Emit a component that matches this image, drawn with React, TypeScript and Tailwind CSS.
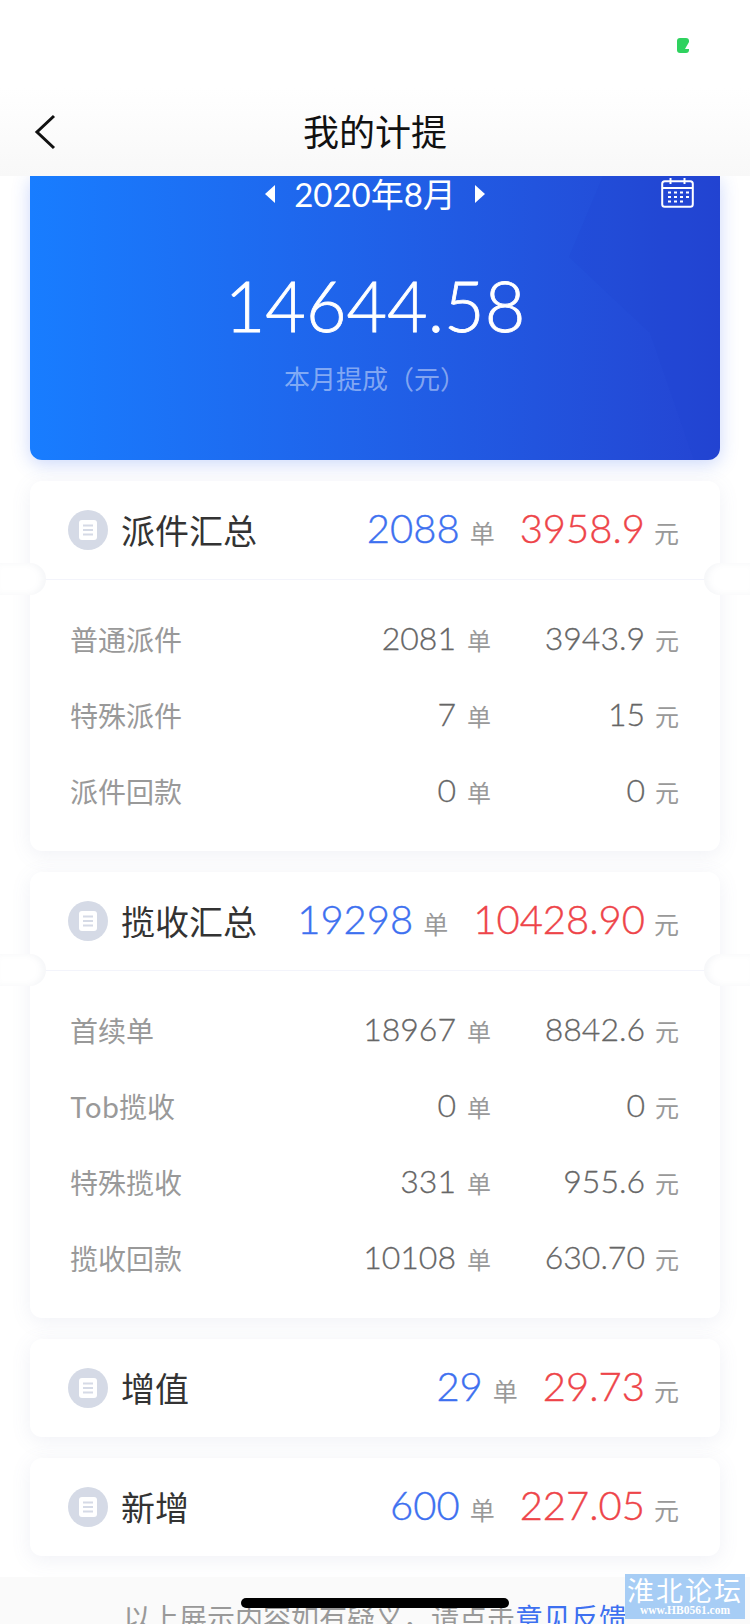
const cn = '"Noto Sans CJK SC", sans-serif';

type Row = { label: string; count: string; amount: string };

const sendRows: Row[] = [
  { label: '普通派件', count: '2081', amount: '3943.9' },
  { label: '特殊派件', count: '7', amount: '15' },
  { label: '派件回款', count: '0', amount: '0' },
];

const pickupRows: Row[] = [
  { label: '首续单', count: '18967', amount: '8842.6' },
  { label: 'Tob揽收', count: '0', amount: '0' },
  { label: '特殊揽收', count: '331', amount: '955.6' },
  { label: '揽收回款', count: '10108', amount: '630.70' },
];

function DocIcon() {
  return (
    <svg width="40" height="40" viewBox="0 0 40 40" className="shrink-0">
      <circle cx="20" cy="20" r="20" fill="#d5dae6" />
      <rect x="11" y="10" width="18" height="20" rx="3" fill="#fff" />
      <path d="M15 15.5h10M15 20h10M15 24.5h10" stroke="#d5dae6" strokeWidth="1.8" />
    </svg>
  );
}

function Summary({ title, count, amount }: { title: string; count: string; amount: string }) {
  return (
    <div className="flex h-[98px] items-center pl-[38px] pr-[41px]">
      <DocIcon />
      <div className="ml-[13px] flex-1 text-[34px] leading-none text-[#333] font-['Noto_Sans_CJK_SC',sans-serif]">{title}</div>
      <div className="flex items-baseline pb-[4px] font-['Lato',sans-serif] font-light [-webkit-text-stroke:0.4px]">
        <span className="text-[40px] leading-none text-[#3d70f0]">{count}</span>
        <span className="ml-[10px] text-[25px] font-normal leading-none text-[#999] [-webkit-text-stroke:0] font-['Noto_Sans_CJK_SC',sans-serif]">单</span>
        <span className="ml-[25px] text-[40px] leading-none text-[#ee4449]">{amount}</span>
        <span className="ml-[9px] text-[25px] font-normal leading-none text-[#999] [-webkit-text-stroke:0] font-['Noto_Sans_CJK_SC',sans-serif]">元</span>
      </div>
    </div>
  );
}

function DetailRow({ label, count, amount }: Row) {
  return (
    <div className="flex h-[76px] items-center pl-[40px] pr-[41px]">
      <div className="flex-1 text-[28px] leading-none text-[#999] font-['Noto_Sans_CJK_SC',sans-serif]">{label}</div>
      <div className="flex items-baseline pb-[2px] font-['Lato',sans-serif] font-light [-webkit-text-stroke:0.3px]">
        <span className="text-[32px] leading-none text-[#666]">{count}</span>
        <span className="ml-[11px] text-[24px] font-normal leading-none text-[#999] [-webkit-text-stroke:0] font-['Noto_Sans_CJK_SC',sans-serif]">单</span>
      </div>
      <div className="flex w-[188px] items-baseline justify-end pb-[2px] font-['Lato',sans-serif] font-light [-webkit-text-stroke:0.3px]">
        <span className="text-[32px] leading-none text-[#666]">{amount}</span>
        <span className="ml-[10px] text-[24px] font-normal leading-none text-[#999] [-webkit-text-stroke:0] font-['Noto_Sans_CJK_SC',sans-serif]">元</span>
      </div>
    </div>
  );
}

function Notch({ side }: { side: 'left' | 'right' }) {
  return (
    <div
      className={
        side === 'left'
          ? 'absolute left-[-30px] top-[82px] h-8 w-[46px] rounded-r-full bg-white shadow-[inset_-4px_0_6px_rgba(120,125,160,0.07)]'
          : 'absolute right-[-30px] top-[82px] h-8 w-[46px] rounded-l-full bg-white shadow-[inset_4px_0_6px_rgba(120,125,160,0.07)]'
      }
    />
  );
}

function Card({ title, count, amount, rows }: { title: string; count: string; amount: string; rows?: Row[] }) {
  return (
    <section className="relative rounded-xl bg-white shadow-[0_4px_20px_rgba(110,120,170,0.1)]">
      <Summary title={title} count={count} amount={amount} />
      {rows && (
        <>
          <Notch side="left" />
          <Notch side="right" />
          <div className="border-t border-[#f3f4fb] pb-[22px] pt-[21px]">
            {rows.map((row) => (
              <DetailRow key={row.label} {...row} />
            ))}
          </div>
        </>
      )}
    </section>
  );
}

export default function App() {
  return (
    <div className="relative h-[1624px] w-[750px] overflow-hidden bg-white" style={{ fontFamily: cn }}>
      {/* Status bar + nav */}
      <header className="relative z-10 h-[176px] bg-gradient-to-b from-white from-50% to-[#f8f8f8]">
        <svg width="12" height="15" viewBox="0 0 12 15" className="absolute left-[677px] top-[38px]">
          <rect width="12" height="15" rx="3" fill="#2fd25f" />
          <path d="M12 4 8 11h4z" fill="#fff" />
        </svg>
        <svg width="22" height="36" viewBox="0 0 22 36" className="absolute left-[34px] top-[114px]" fill="none">
          <path d="M20 2 3 18l17 16" stroke="#111" strokeWidth="3" />
        </svg>
        <h1 className="pt-[105px] text-center text-[36px] font-normal leading-[50px] text-[#111]">我的计提</h1>
      </header>

      <main className="flex flex-col gap-[21px] px-[30px]">
        {/* Monthly total */}
        <section className="relative h-[284px] overflow-hidden rounded-b-xl bg-gradient-to-r from-[#187dff] to-[#2444d2] shadow-[0_4px_18px_rgba(50,100,240,0.25)]">
          <svg viewBox="0 0 690 284" className="absolute inset-0 h-full w-full">
            <path d="M573 0 539 81 620 157 664 284H690V0z" fill="#1f3fcf" opacity="0.14" />
          </svg>
          <div className="relative flex h-[36px] items-center justify-center text-white">
            <svg width="10" height="18" viewBox="0 0 10 18"><path d="M10 0v18L0 9z" fill="#fff" /></svg>
            <span className="mx-[19px] text-[33px] leading-none font-['Lato','Noto_Sans_CJK_SC',sans-serif]">2020年8月</span>
            <svg width="10" height="18" viewBox="0 0 10 18"><path d="M0 0v18l10-9z" fill="#fff" /></svg>
          </div>
          <svg width="33" height="30" viewBox="0 0 33 30" className="absolute left-[631px] top-[2px]" fill="none">
            <rect x="1.2" y="3.2" width="30.6" height="25.6" rx="2.5" stroke="#fff" strokeWidth="2" />
            <path d="M1 10h31M9.5 0v6M23.5 0v6" stroke="#fff" strokeWidth="2" />
            <path d="M7 14.5h3M13 14.5h3M19 14.5h3M25 14.5h3M7 19h3M13 19h3M19 19h3M25 19h3M7 23.5h3M13 23.5h3M19 23.5h3" stroke="#fff" strokeWidth="2" />
          </svg>
          <div className="relative pt-[51px] text-center text-[70px] font-light leading-[84px] text-white font-['Lato',sans-serif] [-webkit-text-stroke:0.8px]">14644.58</div>
          <div className="relative mt-[13px] text-center text-[26px] leading-[36px] text-white/45">本月提成（元）</div>
        </section>

        <Card title="派件汇总" count="2088" amount="3958.9" rows={sendRows} />
        <Card title="揽收汇总" count="19298" amount="10428.90" rows={pickupRows} />
        <Card title="增值" count="29" amount="29.73" />
        <Card title="新增" count="600" amount="227.05" />
      </main>

      <footer className="mt-[21px] h-[60px] bg-[#fafafa] pt-[20px] text-center text-[28px] leading-[40px] text-[#999]">
        以上展示内容如有疑义，请点击<span className="text-[#3d70f0]">意见反馈</span>
      </footer>

      {/* Home indicator */}
      <div className="absolute left-[241px] top-[1598px] h-[10px] w-[268px] rounded-full bg-black" />

      {/* Watermark */}
      <div className="absolute left-[625px] top-[1574px] flex h-[45px] w-[120px] flex-col items-center justify-center bg-[#a7cdf5] text-white">
        <div className="text-[27px] font-normal leading-[28px] tracking-[2px]">淮北论坛</div>
        <div className="whitespace-nowrap text-[11.5px] font-bold leading-[13px] font-['Liberation_Serif',serif]">www.HB0561.com</div>
      </div>
    </div>
  );
}
